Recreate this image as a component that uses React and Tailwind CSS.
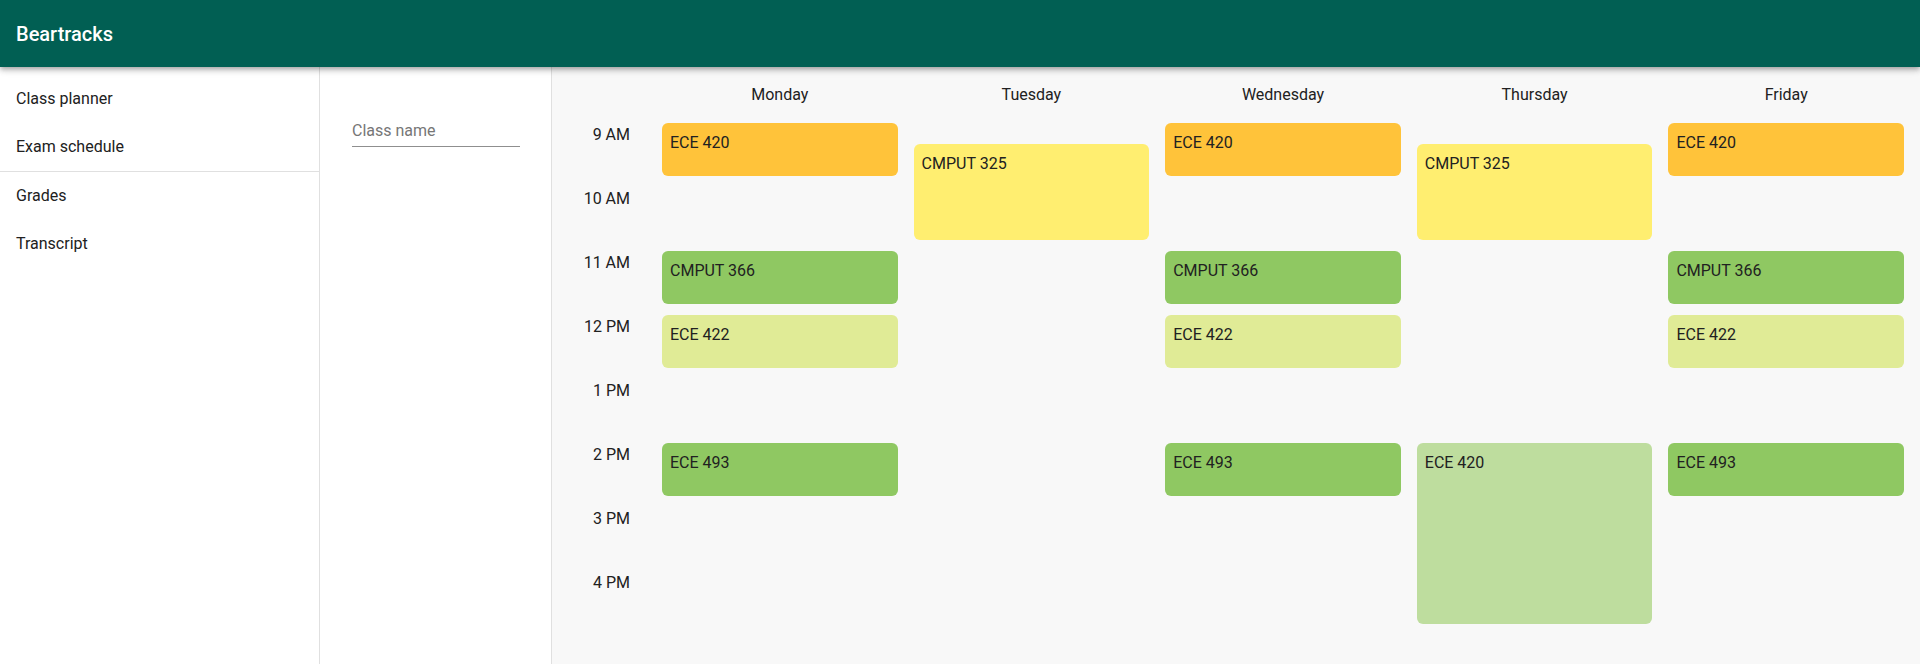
import React from "react";

// hours shown down the left of the calendar
const hours = ["9 AM", "10 AM", "11 AM", "12 PM", "1 PM", "2 PM", "3 PM", "4 PM"];

const HOUR_PX = 64;
const START = 9 * 60;

const mwf = [
  { name: "ECE 420", start: 540, end: 590, color: "bg-[#ffc33a]" },
  { name: "CMPUT 366", start: 660, end: 710, color: "bg-[#8fc862]" },
  { name: "ECE 422", start: 720, end: 770, color: "bg-[#e0eb96]" },
  { name: "ECE 493", start: 840, end: 890, color: "bg-[#8fc862]" },
];

const days = [
  { day: "Monday", classes: mwf },
  {
    day: "Tuesday",
    classes: [{ name: "CMPUT 325", start: 560, end: 650, color: "bg-[#ffee70]" }],
  },
  { day: "Wednesday", classes: mwf },
  {
    day: "Thursday",
    classes: [
      { name: "CMPUT 325", start: 560, end: 650, color: "bg-[#ffee70]" },
      { name: "ECE 420", start: 840, end: 1010, color: "bg-[#bedd9e]" },
    ],
  },
  { day: "Friday", classes: mwf },
];

function App() {
  return (
    <div className="h-screen flex flex-col overflow-hidden font-['Roboto',sans-serif] text-[#212121]">

      {/* HEADER */}

      <header className="relative z-10 h-[67px] shrink-0 bg-[#015f53] flex items-center px-4 shadow-[0_2px_4px_-1px_rgba(0,0,0,0.2),0_4px_5px_0_rgba(0,0,0,0.14),0_1px_10px_0_rgba(0,0,0,0.12)]">
        <h1 className="text-white text-xl font-medium">Beartracks</h1>
      </header>

      <div className="flex flex-1 min-h-0">

        {/* NAV */}

        <nav className="w-[320px] shrink-0 bg-white border-r border-[#e0e0e0]">
          <ul className="pt-2">
            <li className="h-12 flex items-center px-4 text-base">Class planner</li>
            <li className="h-12 flex items-center px-4 text-base">Exam schedule</li>
          </ul>
          <div className="h-px bg-[#e0e0e0]" />
          <ul>
            <li className="h-12 flex items-center px-4 text-base">Grades</li>
            <li className="h-12 flex items-center px-4 text-base">Transcript</li>
          </ul>
        </nav>

        {/* SEARCH */}

        <div className="w-[232px] shrink-0 bg-white border-r border-[#e0e0e0] pl-8 pt-[47px]">
          <input
            type="text"
            placeholder="Class name"
            className="w-[168px] bg-transparent border-b border-[#8f8f8f] pt-[7px] pb-[6px] text-base leading-[19px] outline-none placeholder:text-[#767676]"
          />
        </div>

        {/* CALENDAR */}

        <div className="flex-1 bg-[#f8f8f8] pr-2 flex">

          <div className="w-[102px] shrink-0 pt-[56px]">
            {hours.map((h) => (
              <div key={h} className="h-16 text-right pr-6 text-base leading-6">
                {h}
              </div>
            ))}
          </div>

          <div className="flex-1 grid grid-cols-5">
            {days.map((d) => (
              <div key={d.day} className="flex flex-col">
                <div className="h-[56px] flex items-center justify-center text-base">
                  {d.day}
                </div>
                <div className="relative flex-1 mx-2">
                  {d.classes.map((c) => (
                    <div
                      key={c.name + c.start}
                      className={`absolute left-0 right-0 rounded-md px-2 py-2 text-base leading-6 ${c.color}`}
                      style={{
                        top: ((c.start - START) / 60) * HOUR_PX,
                        height: ((c.end - c.start) / 60) * HOUR_PX,
                      }}
                    >
                      {c.name}
                    </div>
                  ))}
                </div>
              </div>
            ))}
          </div>

        </div>
      </div>
    </div>
  );
}

export default App;
